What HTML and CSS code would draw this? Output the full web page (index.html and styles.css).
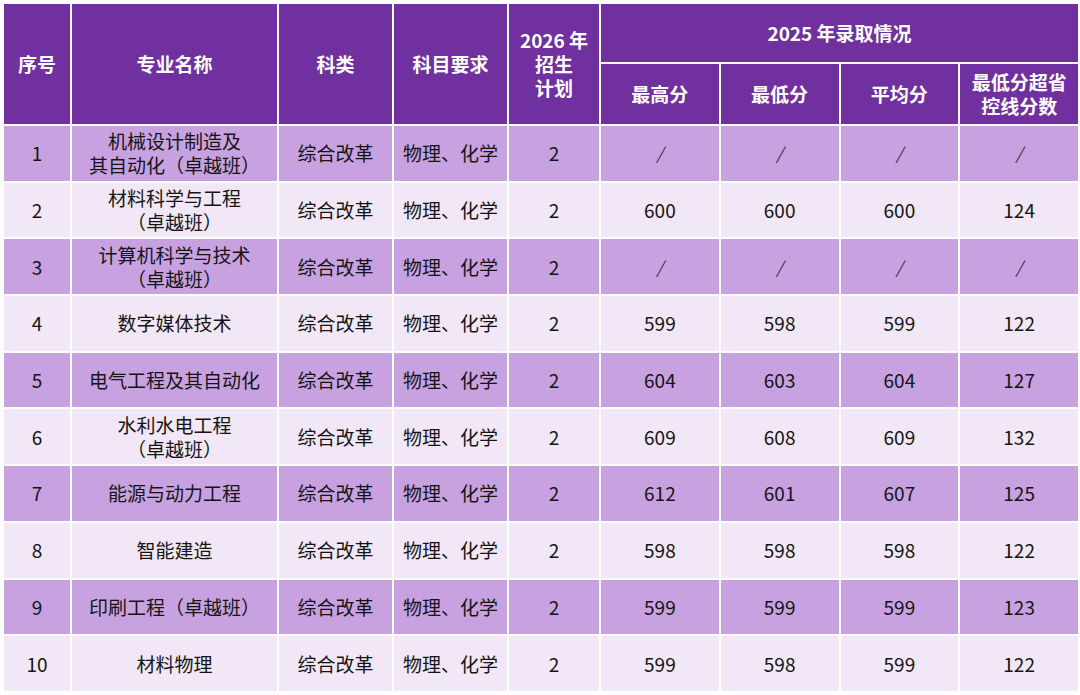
FILE: index.html
```html
<!DOCTYPE html>
<html lang="zh-CN">
<head>
<meta charset="utf-8">
<title>招生计划</title>
<link rel="stylesheet" href="styles.css">
</head>
<body>
<table class="plan">
  <colgroup>
    <col class="c-no"><col class="c-name"><col class="c-type"><col class="c-req"><col class="c-plan">
    <col class="c-score"><col class="c-score"><col class="c-score"><col class="c-score">
  </colgroup>
  <thead>
    <tr class="h1">
      <th rowspan="2">序号</th>
      <th rowspan="2">专业名称</th>
      <th rowspan="2">科类</th>
      <th rowspan="2">科目要求</th>
      <th rowspan="2">2026 年<br>招生<br>计划</th>
      <th colspan="4">2025 年录取情况</th>
    </tr>
    <tr class="h2">
      <th>最高分</th>
      <th>最低分</th>
      <th>平均分</th>
      <th>最低分超省<br>控线分数</th>
    </tr>
  </thead>
  <tbody>
    <tr class="odd"><td>1</td><td>机械设计制造及<br>其自动化（卓越班）</td><td>综合改革</td><td>物理、化学</td><td>2</td><td class="sl">/</td><td class="sl">/</td><td class="sl">/</td><td class="sl">/</td></tr>
    <tr class="even"><td>2</td><td>材料科学与工程<br>（卓越班）</td><td>综合改革</td><td>物理、化学</td><td>2</td><td>600</td><td>600</td><td>600</td><td>124</td></tr>
    <tr class="odd"><td>3</td><td>计算机科学与技术<br>（卓越班）</td><td>综合改革</td><td>物理、化学</td><td>2</td><td class="sl">/</td><td class="sl">/</td><td class="sl">/</td><td class="sl">/</td></tr>
    <tr class="even"><td>4</td><td>数字媒体技术</td><td>综合改革</td><td>物理、化学</td><td>2</td><td>599</td><td>598</td><td>599</td><td>122</td></tr>
    <tr class="odd"><td>5</td><td>电气工程及其自动化</td><td>综合改革</td><td>物理、化学</td><td>2</td><td>604</td><td>603</td><td>604</td><td>127</td></tr>
    <tr class="even"><td>6</td><td>水利水电工程<br>（卓越班）</td><td>综合改革</td><td>物理、化学</td><td>2</td><td>609</td><td>608</td><td>609</td><td>132</td></tr>
    <tr class="odd"><td>7</td><td>能源与动力工程</td><td>综合改革</td><td>物理、化学</td><td>2</td><td>612</td><td>601</td><td>607</td><td>125</td></tr>
    <tr class="even"><td>8</td><td>智能建造</td><td>综合改革</td><td>物理、化学</td><td>2</td><td>598</td><td>598</td><td>598</td><td>122</td></tr>
    <tr class="odd"><td>9</td><td>印刷工程（卓越班）</td><td>综合改革</td><td>物理、化学</td><td>2</td><td>599</td><td>599</td><td>599</td><td>123</td></tr>
    <tr class="even"><td>10</td><td>材料物理</td><td>综合改革</td><td>物理、化学</td><td>2</td><td>599</td><td>598</td><td>599</td><td>122</td></tr>
  </tbody>
</table>
</body>
</html>
```

FILE: styles.css
```css
html, body {
  margin: 0;
  padding: 0;
  background: #ffffff;
}
body {
  padding: 2px;
  font-family: "Noto Sans CJK SC", "Noto Sans", sans-serif;
}
.plan {
  border-collapse: collapse;
  table-layout: fixed;
  width: 1076px;
  font-size: 19px;
  color: #141414;
}
.c-no { width: 68px; }
.c-name { width: 207px; }
.c-type { width: 115px; }
.c-req { width: 115px; }
.c-plan { width: 92px; }
.c-score { width: 119.75px; }
.plan th, .plan td {
  border: 2px solid #ffffff;
  text-align: center;
  vertical-align: middle;
  padding: 0;
  line-height: 24px;
}
.plan th {
  background: #7030a0;
  color: #ffffff;
  font-weight: bold;
  font-size: 19px;
}
.h1 th { height: 58px; }
.h2 th { height: 60px; }
.plan td { height: 54.7px; }
.odd td { background: #c8a1e1; }
.even td { background: #f1e7f6; }
.plan td.sl { color: #333333; font-style: italic; font-size: 17px; }
```
